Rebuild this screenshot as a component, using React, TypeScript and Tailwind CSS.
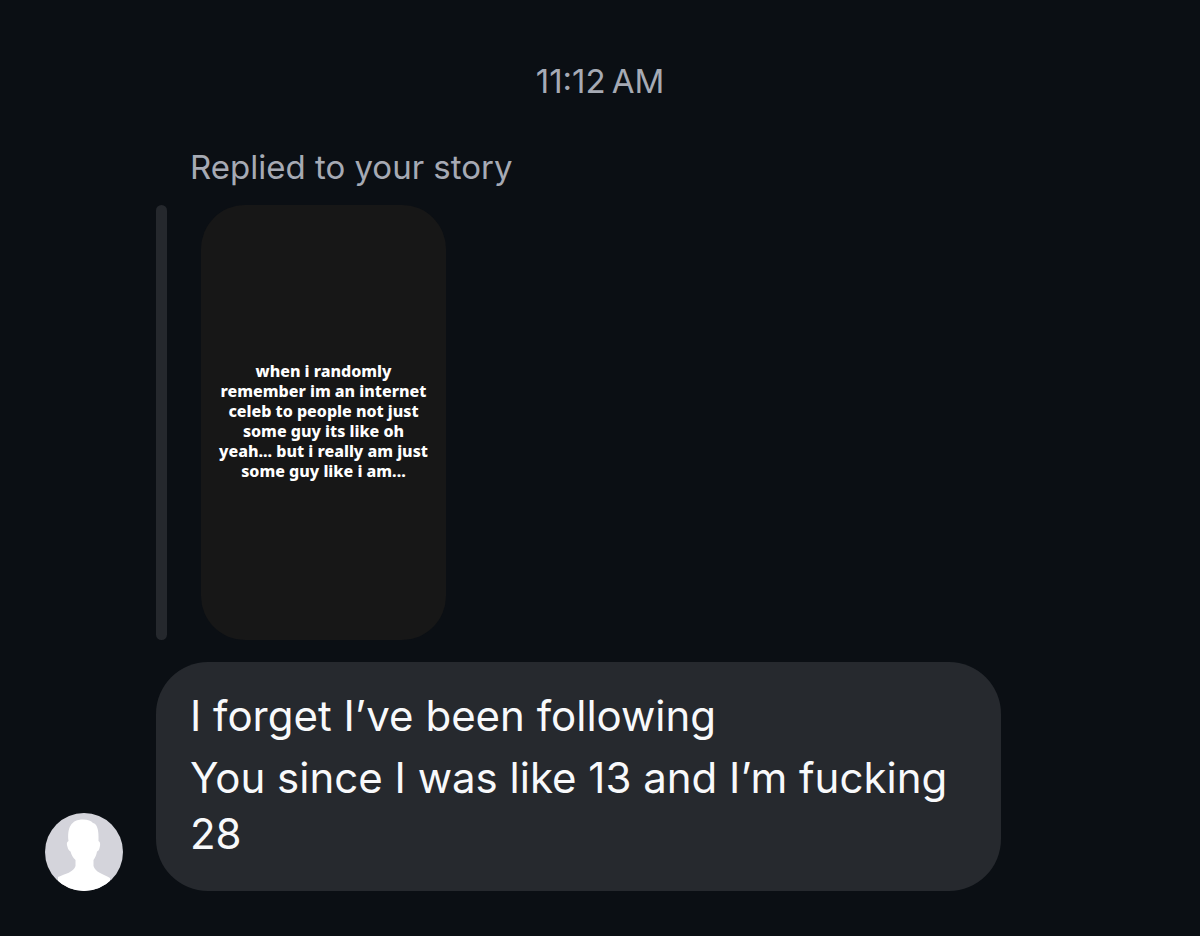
const storyLines = [
    "when i randomly",
    "remember im an internet",
    "celeb to people not just",
    "some guy its like oh",
    "yeah... but i really am just",
    "some guy like i am...",
];

const message = ["I forget I’ve been following", "You since I was like 13 and I’m fucking 28"];

export default function App() {

    return <main className="min-h-screen bg-[#0b0f14] px-[45px] pt-[61px] pb-11 font-['Inter',sans-serif]">
        <div className="text-center text-[33px] leading-10 text-[#a6aab4]">
            <time dateTime="11:12">11:12{"\u202f"}AM</time>
        </div>
        <section className="mt-[46px] flex items-end gap-[33px]">
            <Avatar />
            <div className="flex min-w-0 flex-1 flex-col items-start">
                <p className="pl-[34px] text-[33px] leading-10 text-[#a6aab4]">Replied to your story</p>
                <div className="mt-[18px] flex gap-[34px]">
                    <span className="w-[11px] rounded-full bg-[#25282d]" />
                    <StoryCard />
                </div>
                <Bubble />
            </div>
        </section>
    </main>
}

function StoryCard() {

    return <a href="#story" className="flex h-[435px] w-[245px] items-center justify-center rounded-[44px] bg-[#171717]">
        <span className="pb-1 text-center font-['Noto_Sans',sans-serif] text-[16px] leading-5 font-extrabold whitespace-nowrap text-white">
            {storyLines.map((line) => <span key={line} className="block">{line}</span>)}
        </span>
    </a>
}

function Bubble() {

    return <div className="mt-[22px] flex w-full max-w-[845px] flex-col gap-[6px] rounded-[52px] bg-[#26292e] px-[34px] pt-[26px] pb-[29px] text-[42px] leading-14 text-[#f8f9fb]">
        {message.map((line) => <p key={line}>{line}</p>)}
    </div>
}

function Avatar() {

    return <svg viewBox="0 0 78 78" className="size-[78px] shrink-0 rounded-full bg-[#d4d4db]" role="img" aria-label="Profile picture">
        <path
            fill="#fff"
            d="M38 6.5C43 6.5 46 8 48 10C52 11 54 16 53.5 28C55.5 29 55.5 32 54.5 35C54 37 53.5 38 52 38.5C51.5 42 50 45 48.5 47V53C50 59 58 61 65 65V78H13V64C20 61 29 59 30.5 53V47C28 45 26.5 42 25.5 38.5C24 38 23 36 22.5 34C21.5 31 21.5 29 23.5 28C22 15 26 6.5 38 6.5Z"
        />
    </svg>
}
